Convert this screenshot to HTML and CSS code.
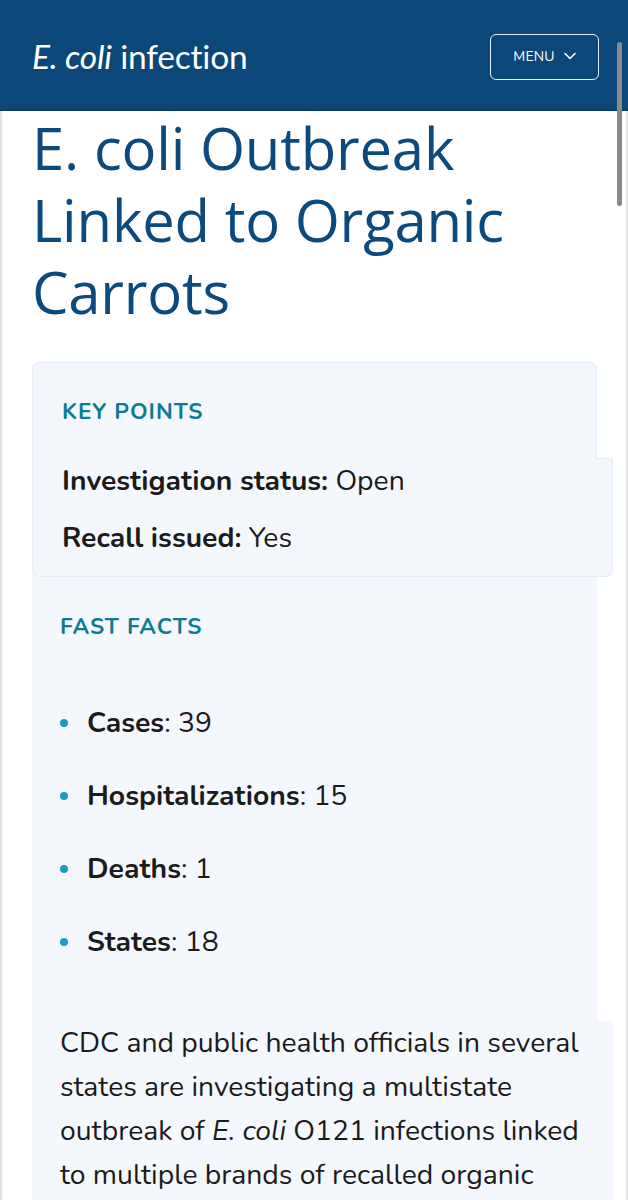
FILE: index.html
```html
<!DOCTYPE html>
<html lang="en">
<head>
<meta charset="utf-8">
<title>E. coli Outbreak Linked to Organic Carrots</title>
<link rel="stylesheet" href="styles.css">
</head>
<body>
<header class="site-header">
  <div class="brand"><em>E. coli</em> infection</div>
  <button class="menu-btn" type="button">MENU
    <svg class="chev" width="12" height="8" viewBox="0 0 12 8"><path d="M1 1.5 L6 6.5 L11 1.5" fill="none" stroke="#fff" stroke-width="1.6" stroke-linecap="round" stroke-linejoin="round"/></svg>
  </button>
</header>
<div class="scrollbar"></div>
<main class="page">
  <h1 class="title">E. coli Outbreak Linked to Organic Carrots</h1>
  <section class="facts">
    <div class="kp-head">
      <h2 class="label">KEY POINTS</h2>
    </div>
    <div class="kp-body">
      <p class="kp-row"><strong>Investigation status:</strong> Open</p>
      <p class="kp-row"><strong>Recall issued:</strong> Yes</p>
    </div>
    <div class="ff">
      <h2 class="label">FAST FACTS</h2>
      <ul class="ff-list">
        <li><strong>Cases</strong>: 39</li>
        <li><strong>Hospitalizations</strong>: 15</li>
        <li><strong>Deaths</strong>: 1</li>
        <li><strong>States</strong>: 18</li>
      </ul>
    </div>
    <div class="summary">
      <p>CDC and public health officials in several states are investigating a multistate outbreak of <em>E. coli</em> O121 infections linked to multiple brands of recalled organic carrots.</p>
    </div>
  </section>
</main>
</body>
</html>
```
FILE: styles.css
```css
html, body {
  margin: 0;
  padding: 0;
  background: #fff;
}
body {
  font-family: "Nunito", Lato, "Noto Sans", sans-serif;
  color: #1b1b1b;
  height: 1200px;
  overflow: hidden;
}
.site-header {
  height: 111px;
  background: #0b4778;
  display: flex;
  align-items: center;
  justify-content: space-between;
  padding: 0 29px 0 32px;
  box-sizing: border-box;
  border-bottom: 1px solid #08375e;
}
.brand {
  color: #fff;
  font-family: "Source Sans Pro", Lato, "Noto Sans", sans-serif;
  font-size: 33.5px;
  letter-spacing: -0.2px;
  margin-top: 1px;
}
.brand em {
  font-style: italic;
}
.menu-btn {
  width: 109px;
  height: 46px;
  margin-top: 3px;
  background: transparent;
  border: 1.5px solid #e8eef4;
  border-radius: 6px;
  color: #fff;
  font-family: "Nunito", Lato, sans-serif;
  font-size: 14px;
  letter-spacing: 0.2px;
  display: flex;
  align-items: center;
  justify-content: center;
  gap: 9px;
  padding: 0;
}
.chev {
  display: block;
  margin-top: -2px;
}
.scrollbar {
  position: absolute;
  top: 42px;
  left: 617px;
  width: 5px;
  height: 164px;
  border-radius: 3px;
  background: #8a8a8a;
}
.page {
  border-left: 2px solid #e3e3e3;
  border-right: 2px solid #e3e3e3;
  padding: 0 14px 0 30px;
  height: 1089px;
  overflow: hidden;
}
.title {
  margin: 1px 0 0;
  font-family: "Open Sans", "Noto Sans", sans-serif;
  font-weight: 400;
  font-size: 58px;
  line-height: 72px;
  color: #0c4a7d;
  letter-spacing: -0.2px;
}
.facts {
  margin-top: 34px;
  width: 565px;
  background: #f4f8fd;
  border-radius: 8px 8px 0 0;
}
.kp-head {
  border: 1px solid #e4edf5;
  border-bottom: none;
  border-radius: 8px 8px 0 0;
  padding: 34px 29px 0;
  height: 61px;
}
.label {
  margin: 0;
  font-family: "Nunito", Lato, sans-serif;
  font-weight: 700;
  font-size: 22.5px;
  letter-spacing: 1px;
  color: #0d7b94;
  line-height: 30px;
}
.kp-body {
  position: relative;
  margin-right: -16px;
  background: #f4f8fd;
  border: 1px solid #e4edf5;
  border-top: none;
  border-radius: 0 0 8px 8px;
  padding: 3px 29px 18px;
  display: flex;
  flex-direction: column;
  gap: 17px;
}
.kp-body::before {
  content: "";
  position: absolute;
  top: 0;
  right: -1px;
  width: 16px;
  height: 8px;
  border-top: 1px solid #e4edf5;
  border-right: 1px solid #e4edf5;
  border-top-right-radius: 6px;
}
.kp-row {
  margin: 0;
  font-size: 28.3px;
  line-height: 40px;
}
.kp-row strong {
  font-weight: 700;
}
.ff {
  padding: 35px 28px 0;
  height: 444px;
  box-sizing: border-box;
}
.ff-list {
  list-style: none;
  margin: 44px 0 0;
  padding: 0;
}
.ff-list li {
  position: relative;
  padding-left: 27px;
  font-size: 28.3px;
  line-height: 73px;
}
.ff-list li::before {
  content: "";
  position: absolute;
  left: 0;
  top: 33px;
  width: 8px;
  height: 8px;
  border-radius: 50%;
  background: #1a9dc3;
}
.ff-list strong {
  font-weight: 700;
}
.summary {
  margin-right: -16px;
  background: #f4f8fd;
  padding: 0 28px 0;
  height: 200px;
}
.summary p {
  margin: 0;
  font-size: 28.3px;
  line-height: 44px;
}
```
